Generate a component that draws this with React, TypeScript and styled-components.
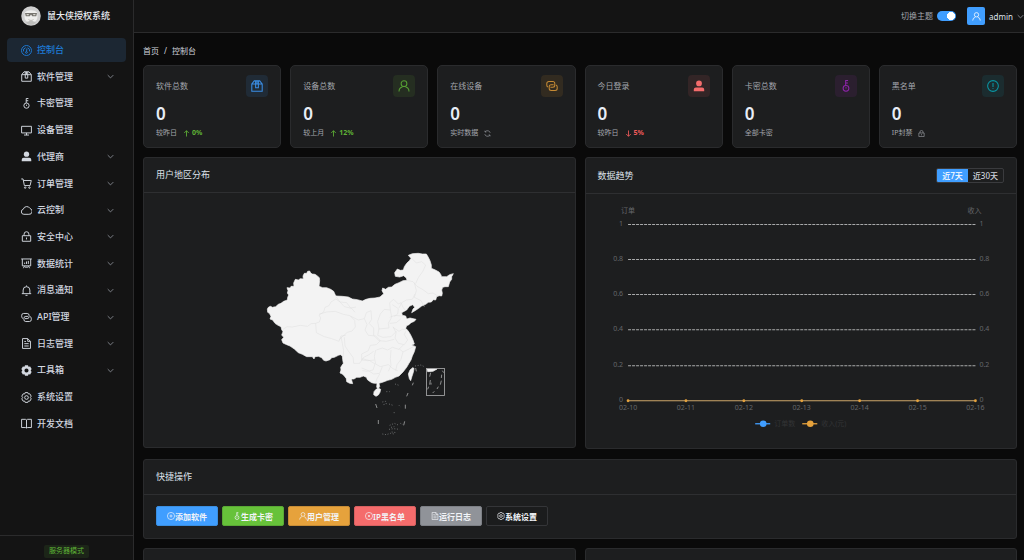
import React from "react";
import styled, { createGlobalStyle } from "styled-components";

const Global = createGlobalStyle`
  *, *::before, *::after { box-sizing: border-box; }
  body {
    margin: 0;
    background: #0a0a0a;
    color: #e5eaf3;
    font-family: "Noto Sans", "Noto Sans CJK SC", sans-serif;
    font-size: 9px;
    line-height: 12px;
  }
  button { font-family: inherit; margin: 0; cursor: pointer; }
  a { color: inherit; text-decoration: none; }
  h1, h2, p, ul, ol { margin: 0; padding: 0; font-weight: 400; list-style: none; }
`;

/* ---------- icons ---------- */

type IconName =
  | "gauge" | "box" | "key" | "monitor" | "userFilled" | "cart" | "cloud" | "lock" | "board"
  | "bell" | "link" | "doc" | "gear" | "setting" | "book" | "user" | "warning" | "refresh"
  | "up" | "down" | "chevron" | "plus" | "ban";

const glyphs: Record<IconName, React.ReactNode> = {
  gauge: (
    <>
      <circle cx="8" cy="8" r="6.8" />
      <path d="M3.8 9.2a4.3 4.3 0 0 1 3-5M9.6 4.3a4.3 4.3 0 0 1 2.6 4.9M8.6 5.2 8 9.4" />
      <circle cx="7.9" cy="10.6" r="1.2" />
    </>
  ),
  box: (
    <>
      <path d="M1.5 5.5h13v9h-13zM1.5 5.5 4.6 1.6h6.8l3.1 3.9" />
      <path d="M6.3 1.6v8.6h3.4V1.6M8 1.6v3.9" />
    </>
  ),
  key: (
    <>
      <circle cx="8" cy="10.9" r="3.6" />
      <path d="M7.6 7.2V1.2h3M7.6 4.2h2.8M8 9.6v1.6" />
    </>
  ),
  monitor: <path d="M1.3 2.3h13.4v9H1.3zM8 11.3v2.9M4.6 14.2h6.8" />,
  userFilled: (
    <g fill="currentColor" stroke="none">
      <circle cx="8" cy="4.8" r="3.6" />
      <path d="M1.5 14.6v-2.2A2.6 2.6 0 0 1 4.1 9.8h7.8a2.6 2.6 0 0 1 2.6 2.6v2.2z" />
    </g>
  ),
  cart: (
    <>
      <path d="M.8 1.8h2.5l1.8 9h7.8l1.6-6.9H3.8" />
      <circle cx="6.2" cy="13.6" r="1" />
      <circle cx="12" cy="13.6" r="1" />
    </>
  ),
  cloud: <path d="M4.4 13.2a3.5 3.5 0 0 1-.8-6.9 5 5 0 0 1 9.2-1.1 4.1 4.1 0 0 1-1.6 8z" />,
  lock: <path d="M2.3 6.9h11.4v7.6H2.3zM4.7 6.9V4.8a3.3 3.3 0 0 1 6.6 0v2.1M8 9.4v2.6" />,
  board: (
    <path d="M.8 1.8h14.4M2.3 1.8v9.4h11.4V1.8M5.4 11.2l-1.6 3.2M10.6 11.2l1.6 3.2M5.5 8.6V6.8M8 8.6V5.2M10.5 8.6V4.4M6 13h4" />
  ),
  bell: <path d="M1.6 12.3h12.8M3.4 12.3V7.4a4.6 4.6 0 0 1 9.2 0v4.9M8 2.6V1.2M6.6 14.6h2.8" />,
  link: (
    <>
      <path d="M10 6.5H7A2.5 2.5 0 0 0 4.500 9v2A2.500 2.500 0 0 0 7 13.500h5a2.500 2.500 0 0 0 2.500-2.500V9A2.500 2.500 0 0 0 13 6.700" />
      <path d="M6 9.500h3A2.500 2.500 0 0 0 11.500 7V5A2.500 2.500 0 0 0 9 2.500H4A2.500 2.500 0 0 0 1.500 5v2A2.500 2.500 0 0 0 3 9.300" />
    </>
  ),
  doc: <path d="M2.6 1.3h7l3.8 3.8v9.6H2.6zM9.6 1.3v3.8h3.8M5 5.2h2.4M5 8.2h6M5 11.4h6" />,
  gear: (
    <path
      fill="currentColor"
      stroke="none"
      fillRule="evenodd"
      d="M6 .9h4l.8 2 2.2-.3 2 3.5L13.7 8l1.3 1.9-2 3.5-2.2-.3-.8 2H6l-.8-2-2.2.3-2-3.5L2.3 8 1 6.1l2-3.5 2.2.3zM8 5.2a2.8 2.8 0 1 0 0 5.6 2.8 2.8 0 0 0 0-5.6z"
    />
  ),
  setting: (
    <>
      <path d="M6.2 1.3h3.6l.7 1.9 2.1-.2 1.8 3.2L13.2 8l1.2 1.8-1.8 3.2-2.1-.2-.7 1.9H6.2l-.7-1.9-2.1.2-1.8-3.2L2.8 8 1.6 6.2 3.4 3l2.1.2z" />
      <circle cx="8" cy="8" r="2.5" />
    </>
  ),
  book: <path d="M1.3 2.3H6.5L8 3.2l1.5-.9h5.2v11.2H9.5L8 14.2l-1.5-.7H1.3zM8 3.2v11" />,
  user: (
    <>
      <circle cx="8" cy="5.1" r="3.6" />
      <path d="M1.8 14.8v-.6a5.4 5.4 0 0 1 4.2-5M14.2 14.8v-.6a5.4 5.4 0 0 0-4.2-5" />
    </>
  ),
  warning: (
    <>
      <circle cx="8" cy="8" r="6.7" />
      <path d="M8 4.2v4.9M8 10.7v1.2" />
    </>
  ),
  refresh: (
    <path d="M2.2 9.4a6 6 0 0 0 10.6 2.3M13.8 6.600A6 6 0 0 0 3.200 4.300M2.600 1.800v3h3M13.400 14.200v-3h-3" />
  ),
  up: <path d="M8 14.5V2M3 7l5-5 5 5" />,
  down: <path d="M8 1.5V14M3 9l5 5 5-5" />,
  chevron: <path d="m2 5 6 6 6-6" />,
  plus: (
    <>
      <circle cx="8" cy="8" r="6.7" />
      <path d="M8 5v6M5 8h6" />
    </>
  ),
  ban: (
    <>
      <circle cx="8" cy="8" r="6.7" />
      <path d="m6 6 4 4M10 6l-4 4" />
    </>
  ),
};

const Svg = styled.svg<{ $size: number }>`
  flex: none;
  display: block;
  width: ${(p) => p.$size}px;
  height: ${(p) => p.$size}px;
`;

const Icon = ({ name, size = 11, weight = 1.3 }: { name: IconName; size?: number; weight?: number }) => (
  <Svg $size={size} viewBox="0.5 0.5 15 15" fill="none" stroke="currentColor" strokeWidth={weight} aria-hidden="true">
    {glyphs[name]}
  </Svg>
);

/* ---------- shell ---------- */

const Shell = styled.div`
  display: flex;
  height: 100vh;
  overflow: hidden;
`;

const Sidebar = styled.aside`
  flex: none;
  display: flex;
  flex-direction: column;
  width: 134px;
  background: #141414;
  border-right: 1px solid #2b2b2c;
`;

const Brand = styled.div`
  display: flex;
  align-items: center;
  gap: 6px;
  height: 32px;
  padding-left: 21px;
  margin-bottom: 6px;
`;

const BrandName = styled.h1`
  font-size: 9px;
  font-weight: 500;
  color: #e8ebf0;
`;

const Menu = styled.ul`
  flex: 1;
  display: flex;
  flex-direction: column;
  justify-content: space-between;
  padding: 0 7px 99px;
`;

const MenuLink = styled.a<{ $active?: boolean }>`
  display: flex;
  align-items: center;
  gap: 5px;
  height: 24px;
  padding: 0 12px 0 14px;
  border-radius: 4px;
  font-weight: 500;
  color: ${(p) => (p.$active ? "#1e7bd6" : "#d3d8e0")};
  background: ${(p) => (p.$active ? "#1c2733" : "transparent")};
`;

const MenuText = styled.span`
  flex: 1;
`;

const Dim = styled.span`
  color: #8f949c;
`;

const SideFoot = styled.div`
  display: flex;
  justify-content: center;
  height: 25px;
  padding-top: 9px;
  border-top: 1px solid #2b2b2c;
`;

const Tag = styled.span`
  height: 13px;
  padding: 0 5px;
  border-radius: 2px;
  background: #1c2518;
  color: #5fb336;
  font-size: 7px;
`;

const Page = styled.div`
  flex: 1;
  min-width: 0;
`;

const TopBar = styled.header`
  display: flex;
  align-items: center;
  justify-content: flex-end;
  height: 33px;
  background: #141414;
  border-bottom: 1px solid #2b2b2c;
`;

const ThemeLabel = styled.label`
  display: flex;
  align-items: center;
  gap: 4px;
  margin-right: 11px;
  font-size: 8px;
  color: #a3a6ad;
`;

const Switch = styled.input`
  appearance: none;
  width: 19px;
  height: 10px;
  margin: 0;
  border-radius: 5px;
  background: radial-gradient(circle at 14px 5px, #fff 4px, #409eff 4px);
`;

const Account = styled.button`
  display: flex;
  align-items: center;
  gap: 4px;
  padding: 0;
  border: 0;
  background: none;
  color: #dfe3ea;
  font-size: 8px;
`;

const Avatar = styled.span`
  display: grid;
  place-items: center;
  width: 18px;
  height: 18px;
  border-radius: 2px;
  background: #409eff;
  color: #fff;
`;

const Content = styled.main`
  padding: 12px 7px 0 9px;
`;

const Crumbs = styled.ol`
  display: flex;
  gap: 5px;
  margin-bottom: 8px;
  font-size: 8px;
  color: #cfd3dc;
`;

/* ---------- cards ---------- */

const Stats = styled.section`
  display: grid;
  grid-template-columns: repeat(6, 1fr);
  gap: 9px;
  margin-bottom: 9px;
`;

const StatCard = styled.article`
  padding: 9px 12px 8px;
  border: 1px solid #2a2b2d;
  border-radius: 5px;
  background: #1d1e1f;
`;

const StatTop = styled.div`
  display: flex;
  align-items: center;
  justify-content: space-between;
  font-size: 8px;
  color: #a3a6ad;
`;

const Badge = styled.span<{ $fg: string; $bg: string }>`
  display: grid;
  place-items: center;
  width: 22px;
  height: 22px;
  border-radius: 4px;
  color: ${(p) => p.$fg};
  background: ${(p) => p.$bg};
`;

const Figure = styled.p`
  margin: 7px 0 3px;
  font-size: 17px;
  font-weight: 600;
  line-height: 20px;
  color: #e8edf6;
`;

const StatNote = styled.p`
  display: flex;
  align-items: center;
  gap: 6px;
  font-size: 7px;
  color: #a3a6ad;
`;

const Trend = styled.span<{ $color: string }>`
  display: flex;
  align-items: center;
  gap: 2px;
  font-weight: 700;
  color: ${(p) => p.$color};
`;

const Columns = styled.div`
  display: grid;
  grid-template-columns: 1fr 1fr;
  align-items: start;
  gap: 9px;
`;

const Panel = styled.section`
  border: 1px solid #2a2b2d;
  border-radius: 3px;
  background: #1d1e1f;
`;

const PanelHead = styled.header<{ $tall?: boolean }>`
  display: flex;
  align-items: center;
  justify-content: space-between;
  height: ${(p) => (p.$tall ? 36 : 35)}px;
  padding: 0 12px;
  border-bottom: 1px solid #2e2f31;
`;

const PanelTitle = styled.h2`
  font-size: 9px;
  color: #dde2ea;
`;

const MapBody = styled.div`
  display: flex;
  justify-content: center;
  padding: 47px 0 7px;
`;

const MapSvg = styled.svg`
  display: block;
  width: 210px;
  height: 200px;
`;

const ChartSvg = styled.svg`
  display: block;
  width: 100%;
  font-size: 7px;
`;

const Segments = styled.div`
  display: flex;
  border: 1px solid #3a3b3e;
  border-radius: 2px;
  overflow: hidden;
`;

const Segment = styled.button<{ $on?: boolean }>`
  height: 13px;
  padding: 0 5px;
  border: 0;
  font-size: 8px;
  font-weight: 500;
  line-height: 12px;
  color: ${(p) => (p.$on ? "#fff" : "#cfd3dc")};
  background: ${(p) => (p.$on ? "#409eff" : "transparent")};
`;

const QuickPanel = styled(Panel)`
  margin: 10px 0 9px;
`;

const Actions = styled.div`
  display: flex;
  flex-wrap: wrap;
  gap: 4px;
  padding: 11px 12px 12px;
`;

const Action = styled.button<{ $bg: string; $line: string }>`
  display: flex;
  align-items: center;
  justify-content: center;
  width: 62px;
  height: 20px;
  padding: 0;
  border: 1px solid ${(p) => p.$line};
  border-radius: 2px;
  background: ${(p) => p.$bg};
  color: #f2f4f8;
  font-size: 8px;
  font-weight: 600;
  white-space: nowrap;
`;

/* ---------- data ---------- */

const menu: { icon: IconName; text: string; more?: boolean; active?: boolean }[] = [
  { icon: "gauge", text: "控制台", active: true },
  { icon: "box", text: "软件管理", more: true },
  { icon: "key", text: "卡密管理" },
  { icon: "monitor", text: "设备管理" },
  { icon: "userFilled", text: "代理商", more: true },
  { icon: "cart", text: "订单管理", more: true },
  { icon: "cloud", text: "云控制", more: true },
  { icon: "lock", text: "安全中心", more: true },
  { icon: "board", text: "数据统计", more: true },
  { icon: "bell", text: "消息通知", more: true },
  { icon: "link", text: "API管理", more: true },
  { icon: "doc", text: "日志管理", more: true },
  { icon: "gear", text: "工具箱", more: true },
  { icon: "setting", text: "系统设置" },
  { icon: "book", text: "开发文档" },
];

const green = "#5fb336";
const red = "#f05a5a";

const stats: {
  label: string; icon: IconName; fg: string; bg: string; note: string;
  trend?: { dir: "up" | "down"; text: string; color: string }; noteIcon?: IconName;
}[] = [
  { label: "软件总数", icon: "box", fg: "#3a8ee6", bg: "#202b36", note: "较昨日", trend: { dir: "up", text: "0%", color: green } },
  { label: "设备总数", icon: "user", fg: "#559f33", bg: "#252e21", note: "较上月", trend: { dir: "up", text: "12%", color: green } },
  { label: "在线设备", icon: "link", fg: "#c58a34", bg: "#322b20", note: "实时数据", noteIcon: "refresh" },
  { label: "今日登录", icon: "userFilled", fg: "#f56c6c", bg: "#332526", note: "较昨日", trend: { dir: "down", text: "5%", color: red } },
  { label: "卡密总数", icon: "key", fg: "#8e24aa", bg: "#2b1f2f", note: "全部卡密" },
  { label: "黑名单", icon: "warning", fg: "#0a97a5", bg: "#1b2c2f", note: "IP封禁", noteIcon: "lock" },
];

const actions: { icon: IconName; text: string; bg: string; line: string }[] = [
  { icon: "plus", text: "添加软件", bg: "#409eff", line: "#3a8ee0" },
  { icon: "key", text: "生成卡密", bg: "#67c23a", line: "#5aa835" },
  { icon: "user", text: "用户管理", bg: "#e6a23c", line: "#c68c36" },
  { icon: "ban", text: "IP黑名单", bg: "#f56c6c", line: "#d66060" },
  { icon: "doc", text: "运行日志", bg: "#909399", line: "#7d8086" },
  { icon: "setting", text: "系统设置", bg: "#1b1c1d", line: "#343538" },
];

/* ---------- drawings ---------- */

const Logo = () => (
  <Svg $size={20} viewBox="0 0 40 40" role="img" aria-label="logo">
    <circle cx="20" cy="20" r="19.5" fill="#cfcfcf" />
    <path d="M8 13c5-6 19-6 24 0l1 8c0 8-6 13-13 13S7 29 7 21z" fill="#eeeeec" />
    <path d="M8 14h24l-1.5 6.5h-8L20 17l-2.5 3.5h-8z" fill="#77756f" />
    <path d="M11 16h5l-1 2.5h-3.5zM24 16h5l-.5 2.5H25z" fill="#d8d6d0" />
    <path d="M15 27c3 2.5 7 2.5 10 0" fill="none" stroke="#a9a7a2" strokeWidth="1.5" />
    <path d="M10 33c5-4 15-4 20 0-5 6-15 6-20 0z" fill="#bdbdbb" />
  </Svg>
);

const mainland =
  "M37 207L41 201L47 199L52 202L62 200L70 193L78 190L86 184L97 180L98 172L101 165L97 159L99 152L96 143L106 144L108 139L117 139L116 129L121 118L130 120L136 116L145 117L144 108L148 100L155 100L158 94L164 93L167 99L172 102L180 103L186 107L193 113L194 122L192 139L203 143L215 143L227 148L236 154L240 163L243 168L262 169L280 171L292 177L307 179L322 183L333 178L345 175L360 174L375 171L386 161L381 152L383 144L392 148L400 142L410 141L420 133L432 128L444 122L456 121L454 114L446 107L434 111L421 109L419 98L427 87L436 91L445 90L448 80L455 70L463 62L468 55L460 46L472 41L490 40L502 42L514 42L520 52L525 62L529 75L529 85L541 90L552 96L557 103L560 110L575 110L584 104L595 101L590 110L590 118L584 126L580 140L570 140L563 142L560 150L562 160L560 168L552 167L545 170L542 180L535 179L529 186L520 187L512 193L500 198L491 205L480 212L470 218L474 207L479 202L473 194L463 199L455 210L440 218L442 226L452 228L455 237L465 234L483 238L478 244L468 248L462 254L455 257L452 265L458 271L463 278L469 289L474 300L478 312L470 315L482 320L480 328L478 335L472 348L468 360L462 370L455 382L444 396L432 408L421 412L410 418L398 421L385 426L372 430L374 440L369 446L365 442L366 430L358 430L350 428L338 420L334 412L325 408L315 412L305 412L297 417L289 417L293 431L284 430L275 425L274 416L268 408L262 402L255 399L258 390L257 382L265 370L263 359L262 348L256 344L250 346L238 352L230 353L225 359L213 363L206 361L200 353L190 349L180 350L177 357L172 350L155 350L142 343L130 338L118 327L105 318L95 314L84 309L80 299L86 292L80 285L84 275L80 269L78 260L69 256L60 250L53 240L45 237L48 229L43 220L38 217Z";

const ChinaMap = () => (
  <MapSvg viewBox="-3 0 630 600" role="img" aria-label="用户地区分布">
    <g fill="#f3f3f3" stroke="#f3f3f3" strokeWidth="2" strokeLinejoin="round">
      <path d={mainland} />
      <path d="M460 402l5-12 8-7 4 2-2 12-4 12-4 13-4-6zM357 455l6-7 8-3 6 3-2 9-5 8-7 4-7-5z" />
      <path d="M516 387h30l-12 7-16 1z" />
    </g>
    <g fill="none" stroke="#dedede" strokeWidth="1.5" strokeLinejoin="round">
      <path d="M84 268l12-8 16 1 24-5 22 3 10-8 14-1 11-4 4-12-5-9 14-9 4-14 12-5 6-11 14-9 12 8 14 15 22 5 10 12" />
      <path d="M243 170l12 16 20 2 12 16 16-3M193 222l22-6 26-2 24 9 20 4 14 14 2 20-10 12-14 4-16 14-8 8" />
      <path d="M182 250l2 28 24 12 22 6 22 8 6-16 14-2M258 290l4 20 4 22-2 18M268 292l2 26 12 18 12 16 2 18 18 0 12-18 16-8 14-10" />
      <path d="M286 228l24 12 18-4 8 18-6 16 10 16 22 2 14 14-12 12-18 2-6 16-20 10 0 18 18 2 20-2" />
      <path d="M328 236l6-18 14-6 2 26-8 12 14 14 0 22M376 222l-8 22 4 22-4 20 16 6 24-2 14-14-8-16M376 222l12-14 18 2 4 22-10 18 2 14-32 3" />
      <path d="M406 210l-2-22 12-10 14 14 8-4 6 14 8 10M412 194l18 12-2 16-10 8M404 232l16-6 20 2M404 250l20-2 14-12M414 262l18 12 10-6 12 0M424 274l-4 20 10 16 18 4 10-14-10-16 4-10" />
      <path d="M356 286l16 16 22 2 24-6M364 330l18-6 16 6 14-8 20 6 14-14M408 330l-2 26 2 20-8 18M432 326l12 10 20-10 14-8M444 336l-6 22-12 16-4 18M362 330l-4 20 4 22 14 8 24-6 14 12 14 6" />
      <path d="M322 356l22 6 16 10-6 18-18 4-14-2M320 384l20 8 16 10 18-2 8-20M374 402l-8 14-4 12M456 121l18 4 12 14 18 10 16 12 14-2 16 10M478 128l6 24-6 20 20 10 10 18" />
      <path d="M470 55l14 14 16-4 12 10-8 18-14 20-8 18M432 204l8-16 14-8 18-2 8-16" />
    </g>
    <rect x="514.5" y="385.5" width="54" height="81" fill="none" stroke="#a9a9aa" strokeWidth="2.5" />
    <g fill="none" stroke="#a2a3a4" strokeWidth="2.5">
      <path d="M527 398l-3 12M526 420l-2 14M521 440l-3 8M562 392l4 6M560 404l-1 10M559 422l-3 12M550 440l-4 7M538 454l-5 5M528 428v6" />
      <path d="M482 384l2 10M475 428l-3 8M459 459l-4 10M451 494v12M449 544l-3 12M370 540v12M362 492l4 12" />
    </g>
    <g fill="none" stroke="#77797b" strokeWidth="2.5" strokeDasharray="3 5">
      <path d="M480 378l18-3 8 4M394 455h10M420 432l12 4M382 486l10-2 2 8-10 2M402 492l12 4M432 496l6 6M416 518h4" />
      <path d="M404 556l14-6 14 6M436 550l8 4M382 582l12 2 12-4 12 2M402 568l14-2 18 2M410 576l14 2M408 562l10-2" />
    </g>
  </MapSvg>
);

const levels = ["1", "0.8", "0.6", "0.4", "0.2", "0"];
const rows = [30, 65, 100, 135, 171, 206];
const days = ["02-10", "02-11", "02-12", "02-13", "02-14", "02-15", "02-16"];
const dayX = (i: number) => 42 + (i * 347) / 6;

const TrendChart = () => (
  <ChartSvg viewBox="0 0 430 254" role="img" aria-label="数据趋势">
    <g fill="#65676b">
      <text x="42" y="19" textAnchor="middle">订单</text>
      <text x="388" y="19" textAnchor="middle">收入</text>
      {levels.map((t, i) => (
        <g key={t}>
          <text x="37" y={rows[i] + 2} textAnchor="end">{t}</text>
          <text x="393" y={rows[i] + 2}>{t}</text>
        </g>
      ))}
      {days.map((d, i) => (
        <text key={d} x={dayX(i)} y="216" textAnchor="middle">{d}</text>
      ))}
    </g>
    {rows.slice(0, 5).map((y) => (
      <path key={y} d={`M42 ${y + 0.5}H389`} stroke="#a9aaab" strokeDasharray="3 1" />
    ))}
    <path d="M42 206.5H389" stroke="#cda66a" strokeWidth="1.2" />
    {days.map((d, i) => (
      <circle key={d} cx={dayX(i)} cy="206.5" r="1.4" fill="#e6a23c" />
    ))}
    <path d="M169 229.5h15" stroke="#409eff" strokeWidth="1.3" />
    <circle cx="177" cy="229.5" r="3.3" fill="#409eff" />
    <path d="M216 229.5h15" stroke="#e6a23c" strokeWidth="1.3" />
    <circle cx="224" cy="229.5" r="3.3" fill="#e6a23c" />
    <g fill="#333436">
      <text x="188" y="232">订单数</text>
      <text x="235" y="232">收入(元)</text>
    </g>
  </ChartSvg>
);

/* ---------- page ---------- */

export default function App() {
  return (
    <>
      <Global />
      <Shell>
        <Sidebar>
          <Brand>
            <Logo />
            <BrandName>鼠大侠授权系统</BrandName>
          </Brand>
          <Menu>
            {menu.map((m) => (
              <li key={m.text}>
                <MenuLink href="#" $active={m.active}>
                  <Icon name={m.icon} />
                  <MenuText>{m.text}</MenuText>
                  {m.more && <Dim><Icon name="chevron" size={7} weight={1.8} /></Dim>}
                </MenuLink>
              </li>
            ))}
          </Menu>
          <SideFoot>
            <Tag>服务器模式</Tag>
          </SideFoot>
        </Sidebar>
        <Page>
          <TopBar>
            <ThemeLabel>
              切换主题
              <Switch type="checkbox" role="switch" defaultChecked />
            </ThemeLabel>
            <Account>
              <Avatar><Icon name="user" size={9} /></Avatar>
              admin
              <Dim><Icon name="chevron" size={7} weight={1.8} /></Dim>
            </Account>
          </TopBar>
          <Content>
            <Crumbs>
              <li><a href="#">首页</a></li>
              <li>/</li>
              <li>控制台</li>
            </Crumbs>
            <Stats>
              {stats.map((s) => (
                <StatCard key={s.label}>
                  <StatTop>
                    {s.label}
                    <Badge $fg={s.fg} $bg={s.bg}><Icon name={s.icon} size={12} /></Badge>
                  </StatTop>
                  <Figure>0</Figure>
                  <StatNote>
                    {s.note}
                    {s.trend && (
                      <Trend $color={s.trend.color}>
                        <Icon name={s.trend.dir} size={7} weight={1.8} />
                        {s.trend.text}
                      </Trend>
                    )}
                    {s.noteIcon && <Icon name={s.noteIcon} size={7} />}
                  </StatNote>
                </StatCard>
              ))}
            </Stats>
            <Columns>
              <Panel>
                <PanelHead><PanelTitle>用户地区分布</PanelTitle></PanelHead>
                <MapBody><ChinaMap /></MapBody>
              </Panel>
              <Panel>
                <PanelHead $tall>
                  <PanelTitle>数据趋势</PanelTitle>
                  <Segments>
                    <Segment $on>近7天</Segment>
                    <Segment>近30天</Segment>
                  </Segments>
                </PanelHead>
                <TrendChart />
              </Panel>
            </Columns>
            <QuickPanel>
              <PanelHead><PanelTitle>快捷操作</PanelTitle></PanelHead>
              <Actions>
                {actions.map((a) => (
                  <Action key={a.text} $bg={a.bg} $line={a.line}>
                    <Icon name={a.icon} size={8} />
                    {a.text}
                  </Action>
                ))}
              </Actions>
            </QuickPanel>
            <Columns>
              <Panel><PanelHead /></Panel>
              <Panel><PanelHead /></Panel>
            </Columns>
          </Content>
        </Page>
      </Shell>
    </>
  );
}
